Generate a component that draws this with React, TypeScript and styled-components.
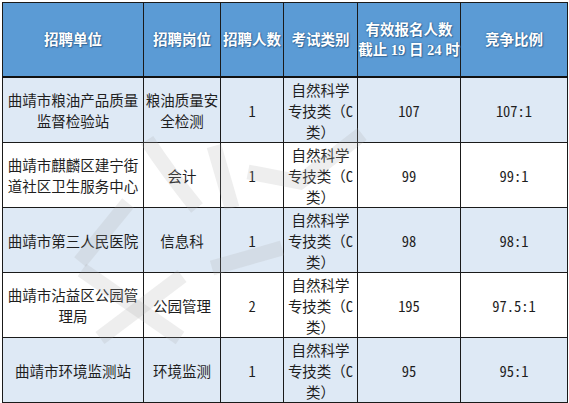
import React from "react"
import styled, { createGlobalStyle } from "styled-components"

const GlobalStyle = createGlobalStyle`
  html, body {
    margin: 0;
    padding: 0;
    background: #ffffff;
  }
`

const Page = styled.div`
  position: relative;
  width: 569px;
  height: 403px;
  padding: 2px;
  box-sizing: border-box;
  background: #ffffff;
`

const Table = styled.table`
  border-collapse: collapse;
  table-layout: fixed;
  width: 566px;
  font-family: "Noto Sans Mono CJK SC", "Noto Sans CJK SC", sans-serif;
  font-size: 14.5px;
  color: #1e1e1e;
`

const HeadCell = styled.th`
  height: 73px;
  padding: 0;
  background: #5b9bd5;
  border: 1px solid #1a1a1a;
  border-bottom: 2px solid #111;
  color: #ffffff;
  font-family: "Liberation Serif", "Noto Sans CJK SC", serif;
  font-weight: bold;
  font-size: 14.5px;
  line-height: 20px;
  text-align: center;
  vertical-align: middle;
  white-space: nowrap;
  text-shadow: 0 0 2px #2b5f91, 1px 1px 1px #3a6ea0;
`

const Row = styled.tr<{ $shade: boolean }>`
  background: ${(p) => (p.$shade ? "#dee9f5" : "#ffffff")};
`

const Cell = styled.td`
  height: 64px;
  padding: 0 1px;
  border: 1px solid #1a1a1a;
  line-height: 21px;
  text-align: center;
  vertical-align: middle;
  white-space: nowrap;
  overflow: hidden;
`

const Watermark = styled.svg`
  position: absolute;
  left: 0;
  top: 0;
  pointer-events: none;
`

const widths = [141, 77, 63, 74, 103, 107]

const heads = [
  ["招聘单位"],
  ["招聘岗位"],
  ["招聘人数"],
  ["考试类别"],
  ["有效报名人数", "截止 19 日 24 时"],
  ["竞争比例"],
]

const exam = ["自然科学", "专技类（C", "类）"]

const rows = [
  { unit: ["曲靖市粮油产品质量", "监督检验站"], post: ["粮油质量安", "全检测"], num: "1", count: "107", ratio: "107:1" },
  { unit: ["曲靖市麒麟区建宁街", "道社区卫生服务中心"], post: ["会计"], num: "1", count: "99", ratio: "99:1" },
  { unit: ["曲靖市第三人民医院"], post: ["信息科"], num: "1", count: "98", ratio: "98:1" },
  { unit: ["曲靖市沾益区公园管", "理局"], post: ["公园管理"], num: "2", count: "195", ratio: "97.5:1" },
  { unit: ["曲靖市环境监测站"], post: ["环境监测"], num: "1", count: "95", ratio: "95:1" },
]

const Lines = ({ items }: { items: string[] }) => (
  <>
    {items.map((t, i) => (
      <React.Fragment key={i}>
        {i > 0 && <br />}
        {t}
      </React.Fragment>
    ))}
  </>
)

export default function App() {
  return (
    <>
      <GlobalStyle />
      <Page>
        <Table>
          <colgroup>
            {widths.map((w, i) => (
              <col key={i} style={{ width: w }} />
            ))}
          </colgroup>
          <thead>
            <tr>
              {heads.map((h, i) => (
                <HeadCell key={i}>
                  <Lines items={h} />
                </HeadCell>
              ))}
            </tr>
          </thead>
          <tbody>
            {rows.map((r, i) => (
              <Row key={i} $shade={i % 2 === 0}>
                <Cell>
                  <Lines items={r.unit} />
                </Cell>
                <Cell>
                  <Lines items={r.post} />
                </Cell>
                <Cell>{r.num}</Cell>
                <Cell>
                  <Lines items={exam} />
                </Cell>
                <Cell>{r.count}</Cell>
                <Cell>{r.ratio}</Cell>
              </Row>
            ))}
          </tbody>
        </Table>
        {/* faint watermark strokes */}
        <Watermark width="569" height="403" viewBox="0 0 569 403">
          <g stroke="#a8a8a8" strokeOpacity="0.2" strokeWidth="15" fill="none" strokeLinecap="butt">
            <path d="M147 140 Q168 172 197 208" />
            <path d="M214 146 L232 208" />
            <path d="M362 134 L300 182 L248 172" />
            <path d="M128 203 L80 262" />
            <path d="M212 268 L282 248" />
            <path d="M82 270 L180 338" />
            <path d="M182 276 L100 338" />
          </g>
        </Watermark>
      </Page>
    </>
  )
}
